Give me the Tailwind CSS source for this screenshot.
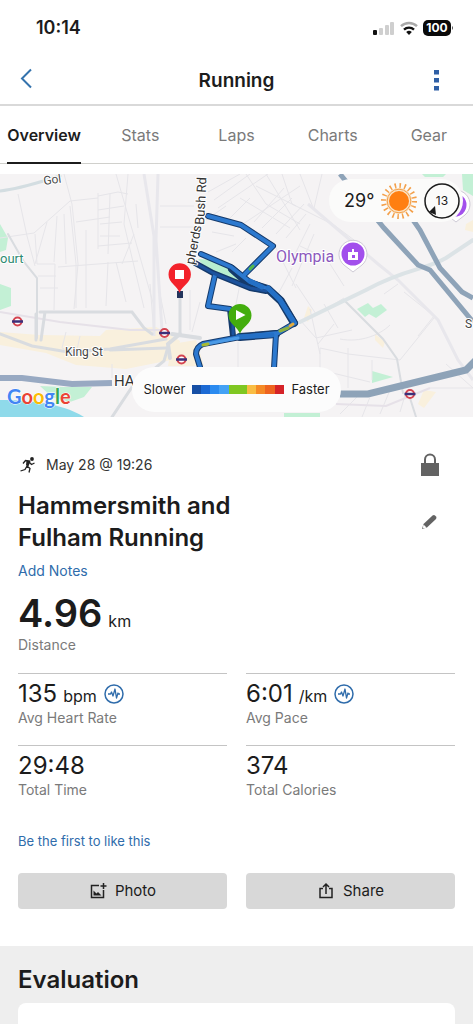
<!DOCTYPE html>
<html lang="en">
<head>
  <meta charset="UTF-8">
  <meta name="viewport" content="width=device-width, initial-scale=1">
  <title>Running</title>
  <script src="https://cdn.jsdelivr.net/npm/@tailwindcss/browser@4"></script>
</head>
<body class="bg-white min-h-screen flex flex-col font-['Inter','Liberation_Sans',sans-serif] text-[#1c1c1c]">

  <!-- Status bar -->
  <div class="h-14 pl-9 pr-5 flex items-center justify-between">
    <span class="text-lg font-semibold">10:14</span>
    <svg class="w-20 h-5" viewBox="0 0 80 20">
      <rect x="0" y="12" width="4" height="5" rx="1" fill="#111"/>
      <g fill="#cfcfcf">
        <rect x="6" y="10" width="4" height="7" rx="1"/>
        <rect x="12" y="7" width="4" height="10" rx="1"/>
        <rect x="17" y="4" width="4" height="13" rx="1"/>
      </g>
      <g fill="none" stroke-width="2.4">
        <path d="M28 8.2a11.5 11.5 0 0 1 16 0" stroke="#a9a9a9"/>
        <path d="M31 11.6a7.4 7.4 0 0 1 10 0" stroke="#111"/>
      </g>
      <path d="M36 17l-2.8-2.9a4 4 0 0 1 5.6 0z" fill="#111"/>
      <rect x="50" y="2" width="28" height="16" rx="5" fill="#0a0a0a"/>
      <path d="M79 8a2.5 2.5 0 0 1 0 4z" fill="#555"/>
      <text x="64" y="14" font-size="12" font-weight="700" fill="#fff" text-anchor="middle">100</text>
    </svg>
  </div>

  <!-- Title bar -->
  <header class="h-[50px] px-4 flex items-center justify-between border-b-2 border-[#d9d9d9]">
    <button aria-label="Back" class="size-6">
      <svg class="size-6" viewBox="0 0 24 24" fill="none" stroke="#3473ad" stroke-width="2"><path d="M15 1.5L6 10.5l9 9"/></svg>
    </button>
    <h1 class="pt-[2px] text-[19px] font-semibold">Running</h1>
    <button aria-label="More options" class="size-6">
      <svg class="size-6" viewBox="0 0 24 24" fill="#2f5fa5"><path d="M1 2h5v4.500H1zM1 10h5v4.500H1zM1 18h5v4.500H1z"/></svg>
    </button>
  </header>

  <!-- Tabs -->
  <nav class="-mx-1 h-[58px] grid grid-cols-5 justify-items-center border-b border-[#d0d0cc] text-[#7a7a7a]">
    <a href="#" class="h-[58px] pt-[2px] flex items-center border-b-2 border-[#1c1c1c] font-semibold text-[#1c1c1c]">Overview</a>
    <a href="#" class="h-[58px] flex items-center">Stats</a>
    <a href="#" class="h-[58px] flex items-center">Laps</a>
    <a href="#" class="h-[58px] flex items-center">Charts</a>
    <a href="#" class="h-[58px] flex items-center">Gear</a>
  </nav>

  <!-- Map -->
  <section class="relative mt-[10px] overflow-hidden">
    <svg class="block w-full" viewBox="0 0 473 243" role="img" aria-label="Route map">
      <rect width="473" height="243" fill="#f5f3f4"/>

      <!-- parks and water -->
      <g fill="#c3f0d5">
        <path d="M0 50l8 14-2 12-6 2zM0 110l11 4v18l-11 4z"/>
        <path d="M40 212l24 1 28 0-8 10-14 5-18-5z"/>
        <path d="M198 85l16 1 24 12 8 9-12-1-30-14z" fill="#b8efd0"/>
        <path d="M422 0h24l-3 3h-18zM462 0h11v22l-10-6z"/>
        <path d="M357 135l11-6 5 5 8-4 6 6-11 8-7-4-4 3z"/>
        <path d="M372 197l21 6-21 6zM284 239h36v4h-36z"/>
      </g>
      <path d="M0 226c25 0 60 2 84 17H0z" fill="#8fdaea"/>

      <!-- commercial areas -->
      <g fill="#f9f0dd">
        <path d="M0 158l40 3 60 1 6-6 50-3 14 8 10 6-4 18-20 4-30 6-50-4-30-12-46-8z"/>
        <path d="M172 170l24-4 8 26-36 0zM424 216l12 2-12 16-6-4zM466 50l7-4v12l-8-2z"/>
        <path d="M375 160l10 8-2 6-8-8zM308 132l4 4-4 12-4-4z"/>
      </g>

      <!-- small streets -->
      <g fill="none" stroke="#e6e5e9">
        <path d="M18 20l9 42 8 30M64 0l8 30 6 60-4 45M0 64l34-5 36-32 28-3M47 48l-12 42M57 42l-3 46M35 60l2 30M64 40l2 50M37 90h18l-1 46M70 32l6 58M98 19v56M98 22l20-4 10 2M110 20l-2 60M116 0l18 62 20 70M128 0l-4 50 20 84M98 36l26-4M100 50l22-2M76 48l34-5M100 62h20M98 72l34-3M58 93l80-6M76 90v44M86 56v78M108 88l-2 44M116 88l10 40M134 60l-12 30M136 30l2 24M38 102h18M40 114h18M66 158l-4 16 14 6 4-18M112 190v14"/>
        <path d="M160 32h34M160 53h36M208 18l32-18M214 26l36-26M218 34l50-34M206 46l20-14M230 44l20-20M240 52l60-40M212 58l22 4M216 78l20-8M232 78l14-14M254 48l30-34M262 54l30-30M276 60l28-30M286 64l20-24M246 0l20 30 34 20M266 0l34 56M282 0l10 30 40 20M300 0l14 36 40 30M322 0l-8 34M256 12l40 20M240 24l50 30M300 72l30 14M276 74l20 40M290 90l20-40M314 60l-22 52M330 90l14 22M292 94l-16 30M190 116v40M200 128l-8 30M238 168v30M240 110l-4 20M160 120l6 30M150 110l4 50"/>
        <path d="M310 135l10 45M300 146l16 18 36-8M296 110l20 30M324 130l14 24M318 140l26-16M334 150l-16 20M320 174l28 6 52 6M348 174v40M320 196l50 12M320 174v34M372 186v20M400 186l34-42M404 118l30 24-16 20M340 165c20 4 40-4 50-14M384 120l14-10M446 190l27 24M340 240l20-20M362 243l10-25M380 240l10-24M400 238l6-20M430 214h43"/>
      </g>

      <!-- railways -->
      <g fill="none" stroke="#e8e7ec" stroke-width="3">
        <path d="M144 0l10 62v100M158 0l-2 66 6 90"/>
        <path d="M308 30l70 60 20 16 40 40 20 40 15 20"/>
        <path d="M0 138l60 10 70 8 34 0M336 230l50 2 44-18" stroke-width="2" stroke="#e6e1e8"/>
      </g>

      <!-- main roads -->
      <g fill="none" stroke="#d9dce0" stroke-linecap="round">
        <path d="M0 17c20-2 40-9 60-15" stroke="#d3dde1" stroke-width="3"/>
        <path d="M8 60l16 28 13 16v60" stroke-width="2"/>
        <path d="M36 140v26M45 138l-4 28M40 138h92l12 16 8 6M180 122v38M0 160l32 12 36 6 42-3 56-10M110 176l56-2" stroke-width="3"/>
        <path d="M172 160l28 4M180 160l-12 10 2 14" stroke-width="4"/>
        <path d="M112 243l20-30 32-26 4-14" stroke-width="3"/>
        <path d="M345 127l38 38 14 20 6 34M410 224l6 19" stroke-width="2"/>
        <path d="M300 148l66-32c40-22 60-20 80-32l27-18" stroke="#dce3e6" stroke-width="4"/>
      </g>
      <g fill="none" stroke="#8ea3b8">
        <path d="M0 204h22l50 6 40-1" stroke-width="6" stroke="#98a9c2"/>
        <path d="M340 220h28l98-24 10-10" stroke-width="7"/>
        <path d="M340 0l44 54 34 37 12 5 43 52" stroke-width="5"/>
        <path d="M402 30l18 26 20 38 22 24 11 6" stroke-width="5"/>
      </g>

      <!-- route -->
      <g fill="none" stroke-linejoin="round" stroke-linecap="round">
        <g stroke="#153a6b" stroke-width="6">
          <path d="M208 42l33 9 32 21-28 28"/>
          <path d="M201 80l30 13 19 15 18 7 12 10 15 24-17 10-38 4-37 7q-7 3-7 10l4 13"/>
          <path d="M195 89l18 10 37 15 16 3M215 101l-7 31 22 3 3 27M276 160l-2 34"/>
        </g>
        <path d="M232 95l16 14 20 6 13 12 13 22M240 163l36-3" stroke="#153a6b" stroke-width="8"/>
        <g stroke="#2c79cf" stroke-width="4">
          <path d="M208 42l33 9 32 21-28 28"/>
          <path d="M201 80l30 13 19 15 18 7 12 10 15 24-17 10-38 4-37 7q-7 3-7 10l4 13"/>
          <path d="M215 101l-7 31 22 3M276 160l-2 34"/>
        </g>
        <path d="M195 89l18 10 37 15 16 3M233 140v20" stroke="#1c529c" stroke-width="3"/>
        <path d="M238 163l34-2M268 114l12 12 13 21M250 107l12 6" stroke="#2470c6" stroke-width="5"/>
        <path d="M206 170l32-6" stroke="#4b9ae6" stroke-width="3"/>
        <path d="M280 157l8-3" stroke="#8fb13e" stroke-width="3"/>
        <path d="M290 152l3-2" stroke="#e3ab3c" stroke-width="3"/>
        <path d="M203 171l5-1" stroke="#a8bb32" stroke-width="3"/>
        <path d="M250 95l3-3" stroke="#55b947" stroke-width="3"/>
      </g>

      <!-- station roundels -->
      <g fill="#fff" stroke="#d44450" stroke-width="2">
        <circle cx="17.500" cy="147.500" r="4"/><circle cx="164.500" cy="159" r="4"/><circle cx="181.500" cy="185.500" r="4"/><circle cx="410" cy="220" r="4"/>
      </g>
      <path d="M12 147.500h11M159 159h11M176 185.500h11M404.500 220h11" stroke="#3d2f79" stroke-width="2.500"/>

      <!-- map labels -->
      <g font-family="Roboto, sans-serif" stroke="#fff" stroke-width="2" paint-order="stroke" stroke-linejoin="round">
        <text x="44" y="11" font-size="12" fill="#4a4a4a" transform="rotate(-8 44 11)">Gol</text>
        <text x="0" y="89" font-size="13" fill="#2f8a72">ourt</text>
        <text x="65" y="182" font-size="12" fill="#444">King St</text>
        <text x="114" y="212" font-size="15" fill="#333">HA</text>
        <text x="276" y="88" font-size="16" fill="#8c58bd">Olympia</text>
        <text x="194" y="91" font-size="13" fill="#333" transform="rotate(-79 194 91)">pherds:</text>
        <text x="204" y="51" font-size="13" fill="#333" transform="rotate(-87 204 51)">Bush Rd</text>
        <text x="465" y="154" font-size="12" fill="#444">S</text>
      </g>
      <text x="7" y="230" font-family="Lato, sans-serif" font-size="20" font-weight="700" stroke="#fff" stroke-width="1" paint-order="stroke"><tspan fill="#4285f4">G</tspan><tspan fill="#ea4335">o</tspan><tspan fill="#fbbc05">o</tspan><tspan fill="#4285f4">g</tspan><tspan fill="#34a853">l</tspan><tspan fill="#ea4335">e</tspan></text>

      <!-- place pins -->
      <path d="M353 98l-9-7a14 14 0 1 1 18 0z" fill="#fff" stroke="#cfcbd6" stroke-width="1"/>
      <circle cx="353" cy="80" r="11.500" fill="#a24fec"/>
      <path d="M348 78h4v-3h2v3h4v8h-10z" fill="#fff"/>
      <rect x="352" y="81" width="3" height="3" fill="#a24fec"/>
      <path d="M456 48l-9-7a14 14 0 1 1 18 0z" fill="#fff" stroke="#cfcbd6"/>
      <circle cx="455" cy="31" r="11.500" fill="#a24fec"/>

      <!-- finish -->
      <rect x="177" y="117" width="6" height="7" fill="#23345c"/>
      <path d="M179.500 119c-2-7-11-10-11-18.500a11.200 11.200 0 0 1 22.400 0c0 8.500-9 11.500-11.400 18.500z" fill="#f3222b"/>
      <rect x="175" y="96" width="9" height="9" fill="#fff"/>
      <!-- start -->
      <path d="M240 160c-2-7-11.500-10-11.500-18.500a11.500 11.500 0 0 1 23 0c0 8.500-9.500 11.500-11.500 18.500z" fill="#43ad0d"/>
      <path d="M236 136l9.500 5-9.500 5z" fill="#fff"/>
    </svg>

    <!-- weather -->
    <div class="absolute top-[5px] right-[10px] h-[43px] w-[134px] rounded-full bg-[#fbfbfa] flex items-center justify-between pl-[15px] pr-[3px]">
      <span class="text-lg">29°</span>
      <svg class="size-9" viewBox="0 0 36 36">
        <circle cx="18" cy="18" r="15" fill="none" stroke="#f3a04b" stroke-width="6" stroke-dasharray="1.5 3.212"/>
        <circle cx="18" cy="18" r="13" fill="#fbe3c4"/>
        <circle cx="18" cy="18" r="11.800" fill="none" stroke="#f3a04b"/>
        <circle cx="18" cy="18" r="10" fill="#ff7f11"/>
      </svg>
      <svg class="size-9" viewBox="0 0 36 36">
        <circle cx="18" cy="18" r="17" fill="#fbfbfa" stroke="#1c1c1c" stroke-width="1.500"/>
        <path d="M5 29l6-6 1 9z" fill="#1c1c1c"/>
        <text x="18" y="22" font-size="12" fill="#1c1c1c" text-anchor="middle">13</text>
      </svg>
    </div>

    <!-- pace legend -->
    <div class="absolute bottom-[5px] left-[132px] h-[45px] w-[209px] rounded-full bg-[#fcfcfc] flex items-center justify-center gap-[7px] text-[13px]">
      <span>Slower</span>
      <svg class="w-[92px] h-[9px]" viewBox="0 0 92 9">
        <rect width="9" height="9" fill="#164fa5"/>
        <rect x="9" width="9" height="9" fill="#1c6ad4"/>
        <rect x="18" width="9" height="9" fill="#2b8bf0"/>
        <rect x="27" width="10" height="9" fill="#44a2f5"/>
        <rect x="37" width="18" height="9" fill="#7fc722"/>
        <rect x="55" width="9" height="9" fill="#f9bd43"/>
        <rect x="64" width="9" height="9" fill="#f58a26"/>
        <rect x="73" width="10" height="9" fill="#ee6420"/>
        <rect x="83" width="9" height="9" fill="#d52328"/>
      </svg>
      <span>Faster</span>
    </div>
  </section>

  <!-- Activity summary -->
  <main class="px-[18px] pt-9 pb-[37px]">
    <div class="flex items-center justify-between h-6">
      <div class="flex items-center gap-2 text-sm text-[#333]">
        <svg class="size-5" viewBox="0 0 20 20">
          <circle cx="14" cy="4" r="1.900" fill="#222"/>
          <path d="M5 8.500l2.500-3 4 .5-2.500 5 3 2.500-1 4M9 11l-2 3.500-4.500 1.500M11.500 7.500l2 2 3-1.500" fill="none" stroke="#222" stroke-width="1.300"/>
          <path d="M8.500 5.500l4 .8-2 5-2.500-1z" fill="#222"/>
        </svg>
        <span>May 28 @ 19:26</span>
      </div>
      <svg class="w-[50px] h-6" viewBox="0 0 50 24">
        <rect x="16" y="10" width="18" height="13" fill="#636363"/>
        <path d="M20 11V6.500a5 5 0 0 1 10 0V11" fill="none" stroke="#636363" stroke-width="2"/>
      </svg>
    </div>

    <div class="mt-[13px] flex items-center justify-between">
      <h2 class="w-60 text-2xl leading-8 font-semibold">Hammersmith and Fulham Running</h2>
      <button aria-label="Edit name" class="w-[50px] h-5">
        <svg class="w-[50px] h-5" viewBox="0 0 50 20">
          <path d="M17 17l1.500-5 9-8.500q1.500-1 2.500 0l1 1q1 1.200 0 2.500l-9 8.500z" fill="#636363"/>
          <path d="M18.500 12.500l3 3-2.600 1-1-1z" fill="#fff"/>
        </svg>
      </button>
    </div>
    <a href="#" class="mt-1 block text-sm leading-[26px] text-[#2f6cab]">Add Notes</a>

    <p class="mt-[7px] flex items-baseline gap-[6px]"><span class="text-[38px] leading-[44px] font-semibold">4.96</span><span class="text-base">km</span></p>
    <p class="text-sm leading-5 text-[#7a7a7a]">Distance</p>

    <div class="mt-[18px] grid grid-cols-2 gap-x-[19px]">
      <div class="h-18 border-t border-[#c4c4c4] pt-1">
        <p class="flex items-center leading-8"><span class="text-2xl leading-8">135</span><span class="ml-[6px] pt-1 text-base">bpm</span>
          <svg class="ml-[7px] size-5" viewBox="0 0 20 20" fill="none" stroke="#2f6cab"><circle cx="10" cy="10" r="9" stroke-width="1.500"/><path d="M4 10h2.500l1-2 1.500 4 2-7 1.500 9 1.500-5 .5 1H16" stroke-width="1.300" stroke-linejoin="round"/></svg></p>
        <p class="text-sm leading-4 text-[#7a7a7a]">Avg Heart Rate</p>
      </div>
      <div class="h-18 border-t border-[#c4c4c4] pt-1">
        <p class="flex items-center leading-8"><span class="text-2xl leading-8">6:01</span><span class="ml-[6px] pt-1 text-base">/km</span>
          <svg class="ml-[7px] size-5" viewBox="0 0 20 20" fill="none" stroke="#2f6cab"><circle cx="10" cy="10" r="9" stroke-width="1.500"/><path d="M4 10h2.500l1-2 1.500 4 2-7 1.500 9 1.500-5 .5 1H16" stroke-width="1.300" stroke-linejoin="round"/></svg></p>
        <p class="text-sm leading-4 text-[#7a7a7a]">Avg Pace</p>
      </div>
      <div class="h-18 border-t border-[#c4c4c4] pt-1">
        <p class="text-2xl leading-8">29:48</p>
        <p class="text-sm leading-4 text-[#7a7a7a]">Total Time</p>
      </div>
      <div class="h-18 border-t border-[#c4c4c4] pt-1">
        <p class="text-2xl leading-8">374</p>
        <p class="text-sm leading-4 text-[#7a7a7a]">Total Calories</p>
      </div>
    </div>

    <a href="#" class="mt-[14px] block text-[13px] leading-5 text-[#2f6cab]">Be the first to like this</a>

    <div class="mt-[22px] grid grid-cols-2 gap-x-[19px] text-[15px]">
      <button class="h-9 rounded bg-[#d8d8d8] flex items-center justify-center gap-2">
        <svg class="size-[18px]" viewBox="0 0 18 18" fill="none" stroke="#222" stroke-width="1.500"><path d="M10 3.500H2.500v12h12V8M14.500 1v6M11.500 4h6"/><path d="M4.500 13.500v-5l3 3 1.500-1.500 3.500 3.500z" fill="#222" stroke="none"/></svg>
        Photo
      </button>
      <button class="h-9 rounded bg-[#d8d8d8] flex items-center justify-center gap-2">
        <svg class="size-[18px]" viewBox="0 0 18 18" fill="none" stroke="#222" stroke-width="1.500"><path d="M6 6.500H3v9h12v-9h-3M9 12V2.500M6 5l3-3 3 3"/></svg>
        Share
      </button>
    </div>
  </main>

  <section class="flex-1 flex flex-col bg-[#eee] px-[18px] pt-[18px]">
    <h2 class="text-2xl leading-8 font-semibold">Evaluation</h2>
    <div class="mt-[7px] flex-1 min-h-5 rounded-t-lg bg-white"></div>
  </section>

</body>
</html>
